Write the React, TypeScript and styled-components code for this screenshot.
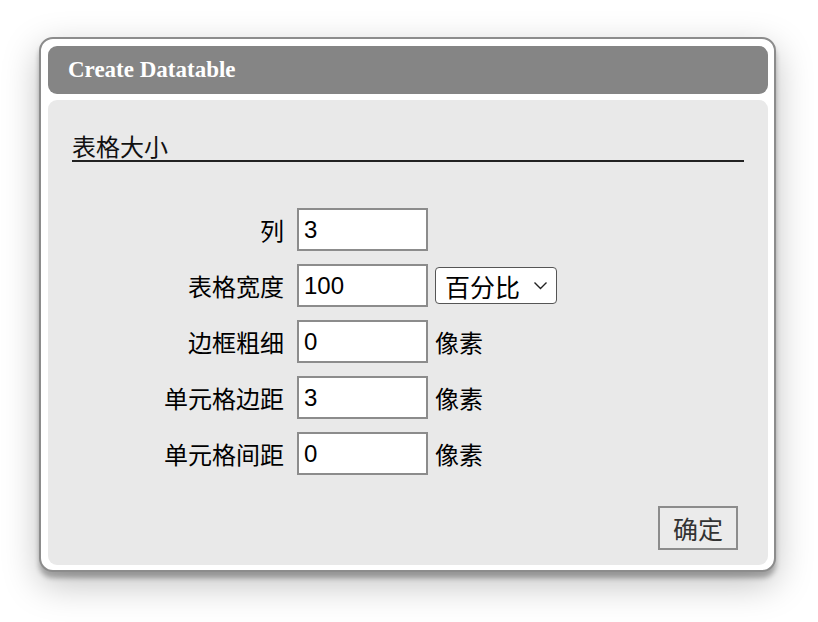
import React from "react";
import styled, { createGlobalStyle } from "styled-components";

const GlobalStyle = createGlobalStyle`
  html, body {
    margin: 0;
    padding: 0;
    background: #ffffff;
  }
  body {
    font-family: "Noto Sans CJK SC", "Liberation Sans", sans-serif;
  }
`;

const Page = styled.div`
  width: 818px;
  height: 622px;
  padding: 37px 0 0 39px;
  box-sizing: border-box;
`;

const Dialog = styled.div`
  width: 737px;
  box-sizing: border-box;
  background: #ffffff;
  border: 2px solid #8c8c8c;
  border-radius: 14px;
  padding: 7px 6px 5px 7px;
  display: flex;
  flex-direction: column;
  gap: 6px;
  box-shadow: 0 12px 36px rgba(0, 0, 0, 0.25), 0 6px 5px rgba(0, 0, 0, 0.28);
`;

const TitleBar = styled.div`
  height: 48px;
  background: #858585;
  border-radius: 9px;
  display: flex;
  align-items: center;
  padding-left: 20px;
  color: #ffffff;
  font-family: "Liberation Serif", "DejaVu Serif", serif;
  font-weight: bold;
  font-size: 23px;
`;

const Body = styled.div`
  height: 465px;
  box-sizing: border-box;
  background: #e9e9e9;
  border-radius: 9px;
  padding: 32px 24px 0;
  display: flex;
  flex-direction: column;
`;

const Heading = styled.div`
  font-size: 24px;
  line-height: 28px;
  color: #111;
  border-bottom: 2px solid #222;
`;

const Form = styled.div`
  margin-top: 46px;
  display: grid;
  grid-template-columns: 212px 131px auto;
  column-gap: 13px;
  row-gap: 13px;
  align-items: center;
`;

const Label = styled.label`
  text-align: right;
  font-size: 24px;
  color: #000;
  line-height: 43px;
`;

const Field = styled.input`
  width: 131px;
  height: 43px;
  box-sizing: border-box;
  border: 2px solid #8c8c8c;
  background: #fff;
  padding: 0 5px;
  font-family: "Liberation Sans", Arial, sans-serif;
  font-size: 24px;
  color: #000;
  outline: none;
`;

const Extra = styled.div`
  margin-left: -6px;
  display: flex;
  align-items: center;
  font-size: 24px;
  color: #000;
`;

const SelectBox = styled.div`
  position: relative;
  width: 122px;
  height: 37px;
`;

const Select = styled.select`
  appearance: none;
  width: 100%;
  height: 100%;
  box-sizing: border-box;
  border: 1px solid #555;
  border-radius: 4px;
  background: #fff;
  padding: 0 0 0 9px;
  font-family: "Noto Sans CJK SC", sans-serif;
  font-size: 25px;
  color: #000;
  outline: none;
`;

const Chevron = styled.svg`
  position: absolute;
  right: 9px;
  top: 14px;
  pointer-events: none;
`;

const Footer = styled.div`
  margin-top: 31px;
  display: flex;
  justify-content: flex-end;
  padding-right: 6px;
`;

const Button = styled.button`
  width: 80px;
  height: 44px;
  box-sizing: border-box;
  border: 2px solid #8c8c8c;
  background: #ebebeb;
  font-family: "Noto Sans CJK SC", sans-serif;
  font-size: 25px;
  color: #333;
  padding: 0;
`;

type Row = { label: string; value: string; unit?: "px" | "select" };

const rows: Row[] = [
  { label: "列", value: "3" },
  { label: "表格宽度", value: "100", unit: "select" },
  { label: "边框粗细", value: "0", unit: "px" },
  { label: "单元格边距", value: "3", unit: "px" },
  { label: "单元格间距", value: "0", unit: "px" },
];

export default function App() {
  return (
    <>
      <GlobalStyle />
      <Page>
        <Dialog>
          <TitleBar>Create Datatable</TitleBar>
          <Body>
            <Heading>表格大小</Heading>
            <Form>
              {rows.map((r) => (
                <React.Fragment key={r.label}>
                  <Label>{r.label}</Label>
                  <Field defaultValue={r.value} />
                  <Extra>
                    {r.unit === "px" && "像素"}
                    {r.unit === "select" && (
                      <SelectBox>
                        <Select defaultValue="percent">
                          <option value="percent">百分比</option>
                          <option value="px">像素</option>
                        </Select>
                        <Chevron width="15" height="9" viewBox="0 0 15 9">
                          <path d="M1.5 1.5 L7.5 7.5 L13.5 1.5" fill="none" stroke="#222" strokeWidth="1.4" />
                        </Chevron>
                      </SelectBox>
                    )}
                  </Extra>
                </React.Fragment>
              ))}
            </Form>
            <Footer>
              <Button>确定</Button>
            </Footer>
          </Body>
        </Dialog>
      </Page>
    </>
  );
}
